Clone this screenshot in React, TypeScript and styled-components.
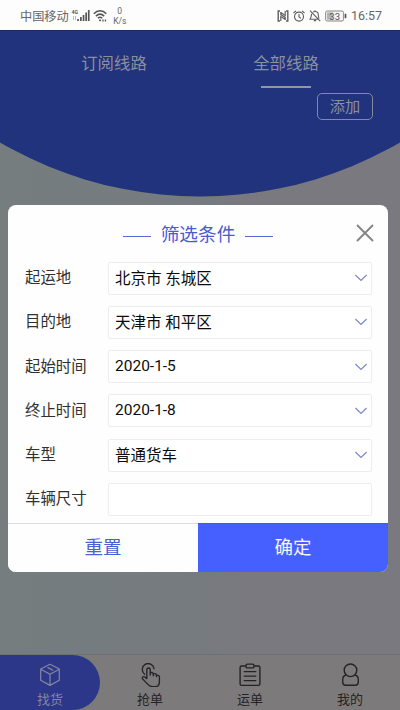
import React from "react";
import styled, { createGlobalStyle } from "styled-components";

const GlobalStyle = createGlobalStyle`
  * { box-sizing: border-box; }
  body {
    margin: 0;
    font-family: Roboto, "Noto Sans CJK SC", sans-serif;
    background: #fdfdfd;
  }
  button { font-family: inherit; padding: 0; background: none; border: 0; }
`;

const Screen = styled.div`
  position: relative;
  display: flex;
  flex-direction: column;
  width: 400px;
  height: 710px;
  overflow: hidden;
  background: linear-gradient(90deg, #757d7f 0%, #767b7f 50%, #79797f 60%, #79797f 100%);
`;

const StatusBar = styled.div`
  display: flex;
  align-items: center;
  height: 30px;
  flex: none;
  padding: 1px 18px 0 20px;
  background: #fdfdfd;
  color: #666;
  line-height: 20px;
  svg { display: block; flex: none; }
`;

const Carrier = styled.span`
  font-size: 12.2px;
  margin: 2px 2px 0 0;
  white-space: nowrap;
`;

const Speed = styled.div`
  width: 16px;
  margin: 0 auto 0 4px;
  font-size: 8.5px;
  line-height: 10px;
  text-align: center;
  white-space: nowrap;
`;

const StatusIcons = styled.div`
  display: flex;
  align-items: center;
  gap: 4px;
`;

const Clock = styled.span`
  font-size: 12.5px;
  letter-spacing: -0.05px;
`;

const Header = styled.header`
  display: flex;
  flex-direction: column;
  height: 168px;
  flex: none;
  background: #20337c;
  border-top: 1px solid #1a2a66;
  clip-path: circle(397px at 200px -230.5px);
`;

const Tabs = styled.div`
  display: flex;
  height: 57px;
  padding: 0 28px;
`;

const Tab = styled.button<{ $active?: boolean }>`
  display: flex;
  flex-direction: column;
  align-items: center;
  flex: 1;
  padding-top: 20px;
  font-size: 16.4px;
  line-height: 26px;
  color: #8d8f9d;
  &::after {
    content: "";
    width: 50px;
    height: 2px;
    margin-top: 9px;
    background: ${(p) => (p.$active ? "#9495a2" : "transparent")};
  }
`;

const AddButton = styled.button`
  align-self: flex-end;
  width: 56px;
  height: 27px;
  margin: 5px 27px 0 0;
  border: 1px solid #8589a0;
  border-radius: 5px;
  font-size: 15.2px;
  line-height: 24px;
  color: #8d8f9d;
`;

const Content = styled.main`
  flex: 1;
`;

const NavBar = styled.nav`
  display: grid;
  grid-template-columns: repeat(4, 1fr);
  height: 56px;
  flex: none;
  border-top: 1px solid #6f6f76;
  background: #7d7a7b;
`;

const NavItem = styled.button<{ $active?: boolean }>`
  display: flex;
  flex-direction: column;
  align-items: center;
  padding-top: 8px;
  font-size: 13px;
  line-height: 19px;
  color: ${(p) => (p.$active ? "#85869f" : "#242426")};
  background: ${(p) => (p.$active ? "#2c3789" : "transparent")};
  border-radius: ${(p) => (p.$active ? "0 28px 28px 0" : "0")};
  svg { display: block; margin-bottom: 3px; }
`;

const Dialog = styled.section`
  position: absolute;
  top: 204.5px;
  left: 8px;
  display: flex;
  flex-direction: column;
  width: 380px;
  height: 367px;
  overflow: hidden;
  border-radius: 8px;
  background: #fefefe;
`;

const DialogHead = styled.div`
  display: grid;
  grid-template-columns: 1fr auto 1fr;
  align-items: center;
  height: 57px;
  padding: 3px 14px 0 14px;
`;

const Title = styled.h2`
  grid-column: 2;
  display: flex;
  align-items: center;
  gap: 10px;
  margin: 0;
  font-size: 18.7px;
  font-weight: 400;
  line-height: 28px;
  color: #4b5ad2;
  &::before, &::after {
    content: "";
    width: 28px;
    height: 1px;
    margin-top: 3px;
    background: #5b69d0;
  }
`;

const CloseButton = styled.button`
  justify-self: end;
  padding-bottom: 3px;
  svg { display: block; }
`;

const Form = styled.div`
  display: flex;
  flex-direction: column;
  flex: 1;
  gap: 11.3px;
`;

const Row = styled.div`
  display: flex;
  align-items: center;
  height: 33px;
  padding: 0 16.5px 0 17px;
`;

const Label = styled.label`
  width: 83px;
  font-size: 15.4px;
  line-height: 24px;
  color: #303030;
`;

const Field = styled.div`
  display: flex;
  align-items: center;
  justify-content: space-between;
  flex: 1;
  height: 33px;
  padding: 0 4px 0 6px;
  border: 1px solid #ededed;
  border-radius: 2px;
  background: #fff;
  font-size: 15.5px;
  line-height: 24px;
  color: #0c0c0c;
`;

const Value = styled.span<{ $latin: boolean }>`
  padding-top: ${(p) => (p.$latin ? "0" : "2px")};
  padding-bottom: ${(p) => (p.$latin ? "1px" : "0")};
`;

const Actions = styled.div`
  display: grid;
  grid-template-columns: 1fr 1fr;
  height: 49px;
`;

const Action = styled.button<{ $primary?: boolean }>`
  border-top: 1px solid ${(p) => (p.$primary ? "#4159f5" : "#d9dde0")};
  background: ${(p) => (p.$primary ? "#465fff" : "#fefefe")};
  color: ${(p) => (p.$primary ? "#f4f6ff" : "#4b5fd5")};
  font-size: 18.5px;
  line-height: 28px;
`;

const SignalIcon = () => (
  <svg width="21" height="14" viewBox="0 0 21 14" fill="#555">
    <text x="0.5" y="5" fontSize="6" fontWeight="700" fontFamily="Roboto" textLength="6.5" lengthAdjust="spacingAndGlyphs">4G</text>
    <path d="M2.5 7v4M4.5 7v4" stroke="#bbb" />
    <path d="M6.2 10h1.7v2H6.2zM9 8h1.7v4H9zM11.7 6h1.7v6h-1.7zM14.3 3.5H16V12h-1.7zM16.9 1h1.7v11h-1.7z" />
  </svg>
);

const WifiIcon = () => (
  <svg width="16" height="14" viewBox="-1 0 16 14" fill="none" stroke="#555" strokeWidth="1.5">
    <path d="M.8 4.7C4.5.9 9.6.9 13.3 4.7M2.9 7.1c2.6-2.5 5.7-2.5 8.3 0M4.9 9.3c1.4-1.3 2.9-1.3 4.3 0" />
    <path d="M7 10l1.2 1.4L7 12.6l-1.2-1.2z" fill="#555" stroke="none" />
    <path d="M9.3 11.5h1.3M11.8 11.5h1.3" strokeWidth="1.8" />
  </svg>
);

const NfcIcon = () => (
  <svg width="12" height="12" viewBox="0 0 12 12" fill="none" stroke="#606060">
    <path d="M3 11H1.2V1H3M9 1h1.8v10H9" strokeWidth="1.4" />
    <path d="M3.8 11V6.6L8.2 9.4M8.2 1v4.4L3.8 2.6M3.8 2v2.6l4.4 2.8V10" strokeWidth="1.2" />
  </svg>
);

const AlarmIcon = () => (
  <svg width="12" height="12" viewBox="0 0 12 12" fill="none" stroke="#5c5c5c" strokeWidth="1.1">
    <circle cx="6" cy="6.6" r="4.5" />
    <path d="M6 4v3l1.9 1.2M.5 3L3 .8M9 .8L11.5 3" />
  </svg>
);

const MuteIcon = () => (
  <svg width="12" height="12" viewBox="0 0 12 12" fill="none" stroke="#5c5c5c" strokeWidth="1.1">
    <path d="M1 .7l10.2 10.5M2.6 3.8C2.3 7 2.3 7.5 1 9.3h8M4 2.2c.7-.6 1.2-.7 2-.7 2 0 3.3 1.5 3.3 3.4 0 1.6.2 2.7.9 3.6M4.8 10.6h2.4M6 .3v1.2" />
  </svg>
);

const BatteryIcon = () => (
  <svg width="22" height="12" viewBox="0 0 22 12">
    <rect x=".6" y="1" width="18" height="10" rx="1.6" fill="#f4f4f4" stroke="#888" />
    <path d="M2 2.3h5.8v7.4H2z" fill="#b4b4b4" />
    <path d="M20.5 3.8v4.4" stroke="#555" strokeWidth="1.7" />
    <text x="4.3" y="9.5" fontSize="9.5" fontFamily="Roboto" fill="#555">33</text>
  </svg>
);

const CloseIcon = () => (
  <svg width="18" height="18" viewBox="0 0 18 18" fill="none" stroke="#858585" strokeWidth="1.9">
    <path d="M1 1l16 16M17 1L1 17" />
  </svg>
);

const ChevronIcon = () => (
  <svg width="12" height="8" viewBox="0 0 12 8" fill="none" stroke="#7a87c9" strokeWidth="1.2">
    <path d="M.4 1l5.6 5.4L11.6 1" />
  </svg>
);

const BoxIcon = () => (
  <svg width="22" height="24" viewBox="0 0 22 24" fill="none" stroke="currentColor" strokeWidth="1.2" strokeLinejoin="round" strokeLinecap="round">
    <path d="M11 1.3L20.3 6v11.3L11 22.4 1.7 17.3V6zM1.7 6.2L11 11.2l9.3-5M11 11.2v11M9 4.6l4.7 2.5" />
  </svg>
);

const TapIcon = () => (
  <svg width="22" height="24" viewBox="0 0 22 24" fill="none" stroke="currentColor" strokeWidth="1.35" strokeLinejoin="round" strokeLinecap="round">
    <path d="M5.6 11.2A5.9 5.9 0 1 1 15 5.6" />
    <path d="M7.8 15.6V6.7c0-2.3 3.4-2.3 3.4 0V12M11.2 10.3c.5-1.3 3.1-1.1 3.1.7v1.7M14.3 11.3c.6-1.1 3.1-.8 3.1.9v1.4M17.4 12.6c.8-.8 3 -.5 3 1.3v4.5c0 3.3-1.5 5.2-4.3 5.2h-2.7c-2.1 0-3.3-.7-4.5-2.2l-5.1-5.3c-1.3-1.6.5-3.2 2-2.1l2 1.6" />
  </svg>
);

const ClipboardIcon = () => (
  <svg width="22" height="24" viewBox="0 0 22 24" fill="none" stroke="currentColor" strokeWidth="1.4" strokeLinejoin="round">
    <path d="M7 3H2.5Q1.1 3 1.1 4.4V21Q1.1 22.4 2.5 22.4h17q1.4 0 1.4-1.4V4.4Q20.9 3 19.5 3H15" />
    <rect x="7" y="1.1" width="8" height="3.8" rx="1.5" />
    <path d="M4.7 8.7h12.6M4.7 13.2h12.6M4.7 17.7h12.6" strokeWidth="1.2" />
  </svg>
);

const PersonIcon = () => (
  <svg width="22" height="24" viewBox="0 0 22 24" fill="none" stroke="currentColor" strokeWidth="1.4">
    <circle cx="11.5" cy="7.3" r="6.3" />
    <path d="M6.9 12C4.7 12.6 3.7 14.4 3.7 16.8v2.4c0 2 1.1 3 3.1 3h9.4c2 0 3.1-1 3.1-3v-2.4c0-2.4-1-4.2-3.2-4.8" />
  </svg>
);

const filters = [
  { label: "起运地", value: "北京市 东城区", select: true },
  { label: "目的地", value: "天津市 和平区", select: true },
  { label: "起始时间", value: "2020-1-5", select: true },
  { label: "终止时间", value: "2020-1-8", select: true },
  { label: "车型", value: "普通货车", select: true },
  { label: "车辆尺寸", value: "", select: false },
];

const navItems = [
  { label: "找货", Icon: BoxIcon },
  { label: "抢单", Icon: TapIcon },
  { label: "运单", Icon: ClipboardIcon },
  { label: "我的", Icon: PersonIcon },
];

export default function App() {
  return (
    <>
      <GlobalStyle />
      <Screen>
        <StatusBar>
          <Carrier>中国移动</Carrier>
          <SignalIcon />
          <WifiIcon />
          <Speed>0<br />K/s</Speed>
          <StatusIcons>
            <NfcIcon />
            <AlarmIcon />
            <MuteIcon />
            <BatteryIcon />
            <Clock>16:57</Clock>
          </StatusIcons>
        </StatusBar>
        <Header>
          <Tabs>
            <Tab>订阅线路</Tab>
            <Tab $active>全部线路</Tab>
          </Tabs>
          <AddButton>添加</AddButton>
        </Header>
        <Content />
        <NavBar>
          {navItems.map(({ label, Icon }, i) => (
            <NavItem key={label} $active={i === 0}>
              <Icon />
              {label}
            </NavItem>
          ))}
        </NavBar>
        <Dialog>
          <DialogHead>
            <Title>筛选条件</Title>
            <CloseButton aria-label="关闭"><CloseIcon /></CloseButton>
          </DialogHead>
          <Form>
            {filters.map((f) => (
              <Row key={f.label}>
                <Label>{f.label}</Label>
                <Field>
                  <Value $latin={/^\d/.test(f.value)}>{f.value}</Value>
                  {f.select && <ChevronIcon />}
                </Field>
              </Row>
            ))}
          </Form>
          <Actions>
            <Action>重置</Action>
            <Action $primary>确定</Action>
          </Actions>
        </Dialog>
      </Screen>
    </>
  );
}
